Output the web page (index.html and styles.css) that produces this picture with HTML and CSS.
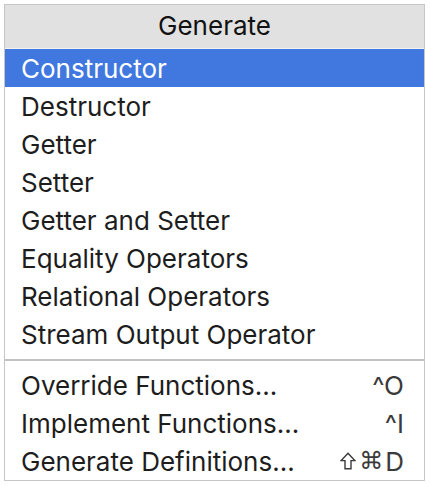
FILE: index.html
```html
<!DOCTYPE html>
<html>
<head>
<meta charset="utf-8">
<link rel="stylesheet" href="styles.css">
</head>
<body>
<div class="menu">
  <div class="menu-header">Generate</div>
  <ul class="menu-list">
    <li class="item selected">Constructor</li>
    <li class="item">Destructor</li>
    <li class="item">Getter</li>
    <li class="item">Setter</li>
    <li class="item">Getter and Setter</li>
    <li class="item">Equality Operators</li>
    <li class="item">Relational Operators</li>
    <li class="item">Stream Output Operator</li>
  </ul>
  <div class="separator"></div>
  <ul class="menu-list">
    <li class="item"><span>Override Functions...</span><span class="shortcut">^O</span></li>
    <li class="item"><span>Implement Functions...</span><span class="shortcut">^I</span></li>
    <li class="item"><span>Generate Definitions...</span><span class="shortcut"><svg class="shift" viewBox="0 0 16 18" width="16" height="18"><path d="M8 1.2 L14.8 8.6 H11 V16.8 H5 V8.6 H1.2 Z" fill="none" stroke="#3a3a3a" stroke-width="1.4" stroke-linejoin="miter"/></svg><span class="sym">⌘</span>D</span></li>
  </ul>
</div>
</body>
</html>
```
FILE: styles.css
```css
html, body {
  margin: 0;
  padding: 0;
  background: #ffffff;
}
body {
  font-family: "Inter", "Noto Sans", "Liberation Sans", sans-serif;
  color: #1d1d1d;
  padding: 4px 5px 4px 4px;
}
.menu {
  border: 1px solid #c6c6c6;
  background: #ffffff;
  width: 419px;
}
.menu-header {
  height: 44px;
  background: #e1e1e1;
  border-bottom: 1px solid #f2f2f2;
  display: flex;
  align-items: center;
  justify-content: center;
  font-size: 26px;
  color: #111111;
  padding-bottom: 3px;
  box-sizing: border-box;
}
.menu-list {
  list-style: none;
  margin: 0;
  padding: 0;
}
.item {
  height: 38px;
  display: flex;
  align-items: center;
  justify-content: space-between;
  padding: 0 20px 0 16px;
  box-sizing: border-box;
  font-size: 26px;
  white-space: nowrap;
}
.item.selected {
  background: #4178e0;
  color: #ffffff;
}
.separator {
  height: 13px;
  display: flex;
  align-items: center;
}
.separator::before {
  content: "";
  display: block;
  width: 100%;
  height: 2px;
  background: #c3c3c3;
}
.shortcut {
  color: #3a3a3a;
  display: flex;
  align-items: center;
}
.shift {
  margin-right: 3px;
}
.sym {
  font-family: "DejaVu Sans", sans-serif;
  font-size: 24px;
  margin-right: 2px;
}
```
